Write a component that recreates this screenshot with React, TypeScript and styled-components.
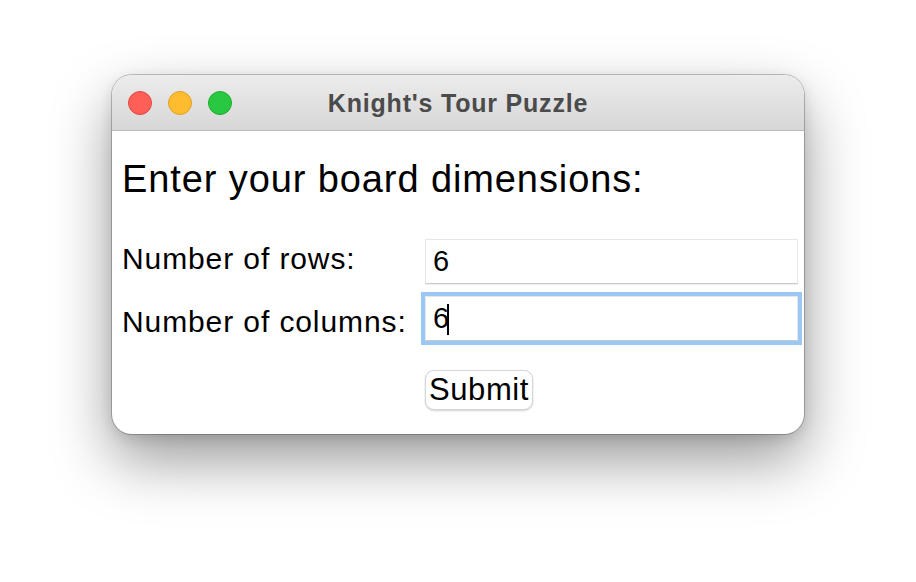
import React from "react";
import styled, { createGlobalStyle } from "styled-components";

const Global = createGlobalStyle`
  html, body { margin: 0; padding: 0; background: #ffffff; }
  body { font-family: "Liberation Sans", Arial, Helvetica, sans-serif; }
  * { box-sizing: border-box; }
`;

const Page = styled.div`
  width: 916px;
  height: 582px;
  padding: 75px 0 0 112px;
  overflow: hidden;
  background: #ffffff;
`;

const Window = styled.div`
  width: 692px;
  height: 359px;
  border-radius: 20px;
  background: #ffffff;
  overflow: hidden;
  box-shadow: 0 0 0 1px rgba(0, 0, 0, 0.22), 0 26px 60px rgba(0, 0, 0, 0.4),
    0 4px 14px rgba(0, 0, 0, 0.12);
  display: flex;
  flex-direction: column;
`;

const TitleBar = styled.div`
  position: relative;
  height: 56px;
  flex: 0 0 56px;
  background: linear-gradient(#ececec, #d7d7d7);
  border-bottom: 1px solid #bcbcbc;
  display: flex;
  align-items: center;
  justify-content: center;
`;

const Lights = styled.div`
  position: absolute;
  left: 16px;
  top: 16px;
  display: flex;
  gap: 16px;
`;

const Light = styled.span<{ $fill: string; $edge: string }>`
  width: 24px;
  height: 24px;
  border-radius: 50%;
  background: ${(p) => p.$fill};
  border: 1px solid ${(p) => p.$edge};
`;

const Title = styled.div`
  font-weight: 700;
  font-size: 25px;
  letter-spacing: 0.8px;
  color: #4b4b4b;
  margin-top: 1px;
`;

const Content = styled.div`
  padding: 28px 0 24px 10px;
  display: flex;
  flex-direction: column;
`;

const Heading = styled.h1`
  margin: 0 0 40px 0;
  font-weight: 400;
  font-size: 38px;
  line-height: 40px;
  letter-spacing: 0.9px;
  color: #000;
`;

const Form = styled.div`
  display: grid;
  grid-template-columns: 303px 373px;
  grid-auto-rows: 45px;
  row-gap: 12px;
`;

const Label = styled.label<{ $drop: number }>`
  font-size: 30px;
  line-height: 45px;
  letter-spacing: 0.9px;
  color: #000;
  margin-top: ${(p) => p.$drop}px;
  white-space: nowrap;
`;

const FieldWrap = styled.div`
  position: relative;
  height: 45px;
`;

const Field = styled.input<{ $focused?: boolean }>`
  width: 100%;
  height: 45px;
  margin: 0;
  padding: 0 0 0 7px;
  font-family: "Liberation Sans", Arial, sans-serif;
  font-size: 29px;
  color: #000;
  background: #fff;
  border: 1px solid #e6e6e6;
  border-bottom-color: #c9c9c9;
  border-radius: 0;
  box-shadow: ${(p) => (p.$focused ? "none" : "0 1px 0 rgba(0,0,0,0.06)")};
  outline: ${(p) => (p.$focused ? "4px solid #9bc7f4" : "none")};
  outline-offset: 0;
  caret-color: transparent;
`;

const Caret = styled.span`
  position: absolute;
  left: 22px;
  top: 8px;
  width: 2px;
  height: 31px;
  background: #000;
`;

const Actions = styled.div`
  padding-left: 303px;
  margin-top: 29px;
  display: flex;
`;

const SubmitButton = styled.button`
  height: 40px;
  width: 108px;
  padding: 0;
  font-family: "Liberation Sans", Arial, sans-serif;
  font-size: 31px;
  letter-spacing: 0.6px;
  color: #000;
  background: #fff;
  border: 1px solid #d6d6d6;
  border-radius: 9px;
  box-shadow: 0 1px 2px rgba(0, 0, 0, 0.18);
`;

export default function App() {
  return (
    <>
      <Global />
      <Page>
        <Window>
          <TitleBar>
            <Lights>
              <Light $fill="#ff5f57" $edge="#e2463f" />
              <Light $fill="#febc2e" $edge="#dfa023" />
              <Light $fill="#28c840" $edge="#1dad2b" />
            </Lights>
            <Title>Knight's Tour Puzzle</Title>
          </TitleBar>
          <Content>
            <Heading>Enter your board dimensions:</Heading>
            <Form>
              <Label $drop={-3}>Number of rows:</Label>
              <FieldWrap>
                <Field defaultValue="6" readOnly />
              </FieldWrap>
              <Label $drop={3}>Number of columns:</Label>
              <FieldWrap>
                <Field defaultValue="6" readOnly $focused />
                <Caret />
              </FieldWrap>
            </Form>
            <Actions>
              <SubmitButton type="button">Submit</SubmitButton>
            </Actions>
          </Content>
        </Window>
      </Page>
    </>
  );
}
